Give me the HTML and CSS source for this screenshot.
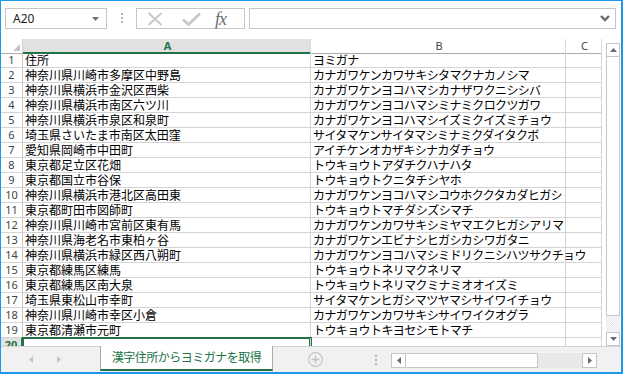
FILE: index.html
```html
<!DOCTYPE html>
<html lang="ja">
<head>
    <meta charset="UTF-8">
    <meta name="viewport" content="width=device-width, initial-scale=1.0">
    <title>漢字住所からヨミガナを取得</title>
    <link rel="stylesheet" href="styles.css">
</head>
<body>
<div class="window">
    <div class="formula-bar">
        <div class="name-box">
            <span>A20</span>
            <svg class="name-arrow" width="7" height="4" viewBox="0 0 7 4"><path d="M0 0h7L3.5 4z" fill="#707070"/></svg>
        </div>
        <div class="grip"><i></i><i></i><i></i></div>
        <div class="fx-buttons">
            <svg class="icon-cancel" width="16" height="14" viewBox="0 0 16 14"><path d="M1.5 1l13 12M14.5 1l-13 12" stroke="#c8c8c8" stroke-width="2" fill="none"/></svg>
            <svg class="icon-enter" width="19" height="14" viewBox="0 0 19 14"><path d="M1 7.5l5.5 5L18 1.5" stroke="#c8c8c8" stroke-width="2.8" fill="none"/></svg>
            <span class="fx">fx</span>
        </div>
        <div class="formula-input">
            <svg class="chevron" width="10" height="7" viewBox="0 0 10 7"><path d="M1 1l4 4 4-4" stroke="#6a6a6a" stroke-width="2.4" fill="none"/></svg>
        </div>
    </div>

    <div class="sheet-area">
        <div class="sheet">
            <div class="row head">
                <div class="cell corner"><svg width="7" height="7" viewBox="0 0 7 7"><path d="M7 0v7H0z" fill="#c4c4c4"/></svg></div>
                <div class="cell col-head selected">A</div>
                <div class="cell col-head">B</div>
                <div class="cell col-head">C</div>
            </div>
            <div class="row"><div class="cell num">1</div><div class="cell">住所</div><div class="cell kana">ヨミガナ</div><div class="cell"></div></div>
            <div class="row"><div class="cell num">2</div><div class="cell">神奈川県川崎市多摩区中野島</div><div class="cell kana">カナガワケンカワサキシタマクナカノシマ</div><div class="cell"></div></div>
            <div class="row"><div class="cell num">3</div><div class="cell">神奈川県横浜市金沢区西柴</div><div class="cell kana">カナガワケンヨコハマシカナザワクニシシバ</div><div class="cell"></div></div>
            <div class="row"><div class="cell num">4</div><div class="cell">神奈川県横浜市南区六ツ川</div><div class="cell kana">カナガワケンヨコハマシミナミクロクツガワ</div><div class="cell"></div></div>
            <div class="row"><div class="cell num">5</div><div class="cell">神奈川県横浜市泉区和泉町</div><div class="cell kana">カナガワケンヨコハマシイズミクイズミチョウ</div><div class="cell"></div></div>
            <div class="row"><div class="cell num">6</div><div class="cell">埼玉県さいたま市南区太田窪</div><div class="cell kana">サイタマケンサイタマシミナミクダイタクボ</div><div class="cell"></div></div>
            <div class="row"><div class="cell num">7</div><div class="cell">愛知県岡崎市中田町</div><div class="cell kana">アイチケンオカザキシナカダチョウ</div><div class="cell"></div></div>
            <div class="row"><div class="cell num">8</div><div class="cell">東京都足立区花畑</div><div class="cell kana">トウキョウトアダチクハナハタ</div><div class="cell"></div></div>
            <div class="row"><div class="cell num">9</div><div class="cell">東京都国立市谷保</div><div class="cell kana">トウキョウトクニタチシヤホ</div><div class="cell"></div></div>
            <div class="row"><div class="cell num">10</div><div class="cell">神奈川県横浜市港北区高田東</div><div class="cell kana">カナガワケンヨコハマシコウホククタカダヒガシ</div><div class="cell"></div></div>
            <div class="row"><div class="cell num">11</div><div class="cell">東京都町田市図師町</div><div class="cell kana">トウキョウトマチダシズシマチ</div><div class="cell"></div></div>
            <div class="row"><div class="cell num">12</div><div class="cell">神奈川県川崎市宮前区東有馬</div><div class="cell kana">カナガワケンカワサキシミヤマエクヒガシアリマ</div><div class="cell"></div></div>
            <div class="row"><div class="cell num">13</div><div class="cell">神奈川県海老名市東柏ヶ谷</div><div class="cell kana">カナガワケンエビナシヒガシカシワガタニ</div><div class="cell"></div></div>
            <div class="row"><div class="cell num">14</div><div class="cell">神奈川県横浜市緑区西八朔町</div><div class="cell kana">カナガワケンヨコハマシミドリクニシハツサクチョウ</div><div class="cell"></div></div>
            <div class="row"><div class="cell num">15</div><div class="cell">東京都練馬区練馬</div><div class="cell kana">トウキョウトネリマクネリマ</div><div class="cell"></div></div>
            <div class="row"><div class="cell num">16</div><div class="cell">東京都練馬区南大泉</div><div class="cell kana">トウキョウトネリマクミナミオオイズミ</div><div class="cell"></div></div>
            <div class="row"><div class="cell num">17</div><div class="cell">埼玉県東松山市幸町</div><div class="cell kana">サイタマケンヒガシマツヤマシサイワイチョウ</div><div class="cell"></div></div>
            <div class="row"><div class="cell num">18</div><div class="cell">神奈川県川崎市幸区小倉</div><div class="cell kana">カナガワケンカワサキシサイワイクオグラ</div><div class="cell"></div></div>
            <div class="row"><div class="cell num">19</div><div class="cell">東京都清瀬市元町</div><div class="cell kana">トウキョウトキヨセシモトマチ</div><div class="cell"></div></div>
            <div class="row"><div class="cell num selected">20</div><div class="cell active"></div><div class="cell"></div><div class="cell"></div></div>
        </div>

        <div class="vscroll">
            <div class="sb-btn"><svg width="7" height="4" viewBox="0 0 7 4"><path d="M0 4h7L3.5 0z" fill="#6a6a6a"/></svg></div>
            <div class="sb-thumb"></div>
            <div class="sb-track"></div>
            <div class="sb-btn"><svg width="7" height="4" viewBox="0 0 7 4"><path d="M0 0h7L3.5 4z" fill="#6a6a6a"/></svg></div>
        </div>
    </div>

    <div class="tab-bar">
        <div class="tab-nav">
            <svg width="4" height="7" viewBox="0 0 4 7"><path d="M4 0v7L0 3.5z" fill="#c4c4c4"/></svg>
            <svg width="4" height="7" viewBox="0 0 4 7"><path d="M0 0v7l4-3.5z" fill="#c4c4c4"/></svg>
        </div>
        <div class="tab">漢字住所からヨミガナを取得</div>
        <svg class="add-sheet" width="15" height="15" viewBox="0 0 15 15"><circle cx="7.5" cy="7.5" r="6.8" stroke="#c4c4c4" stroke-width="1.2" fill="none"/><path d="M7.5 3.5v8M3.5 7.5h8" stroke="#c4c4c4" stroke-width="1.4"/></svg>
        <div class="grip tab-grip"><i></i><i></i><i></i></div>
        <div class="hscroll">
            <div class="sb-btn"><svg width="4" height="7" viewBox="0 0 4 7"><path d="M4 0v7L0 3.5z" fill="#6a6a6a"/></svg></div>
            <div class="sb-thumb"></div>
            <div class="sb-track"></div>
            <div class="sb-btn"><svg width="4" height="7" viewBox="0 0 4 7"><path d="M0 0v7l4-3.5z" fill="#6a6a6a"/></svg></div>
        </div>
    </div>
</div>
</body>
</html>
```

FILE: styles.css
```css
* {
    box-sizing: border-box;
}
body {
    margin: 0;
    font-family: "Noto Sans", "Noto Sans CJK JP", sans-serif;
    color: #222;
}
.window {
    width: 623px;
    height: 374px;
    border-style: solid;
    border-color: #1c97ea;
    border-width: 1px 2px 2px 1px;
    background: #fff;
    display: flex;
    flex-direction: column;
    overflow: hidden;
}

/* formula bar */
.formula-bar {
    display: flex;
    align-items: flex-start;
    height: 38px;
    flex: none;
    padding: 7px 0 0 4px;
}
.name-box {
    width: 102px;
    height: 21px;
    border: 1px solid #c6c6c6;
    display: flex;
    align-items: center;
    justify-content: space-between;
    padding: 0 7px 0 7px;
    font-size: 12px;
}
.grip {
    display: flex;
    flex-direction: column;
    gap: 2px;
    margin: 5px 13px 0 14px;
}
.grip i {
    display: block;
    width: 2px;
    height: 2px;
    background: #b4b4b4;
}
.fx-buttons {
    width: 109px;
    height: 21px;
    border: 1px solid #c6c6c6;
    display: flex;
    align-items: center;
    padding-left: 10px;
}
.icon-enter {
    margin-left: 19px;
}
.fx {
    margin-left: 14px;
    font-family: "Liberation Serif", serif;
    font-style: italic;
    font-size: 18px;
    color: #6e6e6e;
    letter-spacing: -1px;
    line-height: 1;
}
.formula-input {
    width: 367px;
    height: 21px;
    margin-left: 4px;
    border: 1px solid #c6c6c6;
    display: flex;
    align-items: center;
    justify-content: flex-end;
    padding-right: 5px;
}

/* sheet */
.sheet-area {
    display: flex;
    height: 307px;
    flex: none;
}
.sheet {
    width: 601px;
    height: 307px;
    overflow: hidden;
}
.row {
    display: grid;
    grid-template-columns: 22px 288px 255px 36px;
    height: 15px;
}
.cell {
    border-right: 1px solid #d4d4d4;
    border-bottom: 1px solid #d4d4d4;
    padding-left: 2px;
    font-family: "Noto Sans CJK JP", sans-serif;
    font-size: 12px;
    line-height: 14px;
    white-space: nowrap;
    color: #000;
}
.cell.kana {
    letter-spacing: -0.6px;
}
.cell.num {
    padding: 0;
    text-align: center;
    font-family: "Noto Sans", sans-serif;
    font-size: 11px;
    color: #444;
    border-right-color: #c6c6c6;
}
.row.head {
    height: 14px;
}
.row.head .cell {
    border-bottom-color: #ababab;
    line-height: 13px;
}
.cell.corner {
    display: flex;
    align-items: flex-end;
    justify-content: flex-end;
    padding: 0 2px 2px 0;
}
.cell.col-head {
    text-align: center;
    font-family: "Noto Sans", sans-serif;
    font-size: 11px;
    color: #444;
    border-right-color: #dadada;
}
.selected {
    background: #e1e1e1;
    color: #217346 !important;
    font-weight: bold;
}
.row.head .cell.selected {
    border-bottom: 2px solid #217346;
}
.cell.num.selected {
    border-right: 2px solid #217346;
}
.cell.active {
    box-shadow: 0 0 0 1px #217346, inset 0 0 0 1px #217346;
}

/* scrollbars */
.vscroll {
    width: 14px;
    margin: 4px 0 0 4px;
    display: flex;
    flex-direction: column;
}
.sb-btn {
    flex: none;
    width: 14px;
    height: 14px;
    border: 1px solid #c6c6c6;
    background: #fff;
    display: flex;
    align-items: center;
    justify-content: center;
}
.vscroll .sb-thumb {
    height: 259px;
    border: 1px solid #c6c6c6;
    border-top: none;
}
.vscroll .sb-track {
    flex: 1;
    background: repeating-conic-gradient(#e4e4e4 0 25%, #fff 0 50%) 0 0 / 2px 2px;
}

/* sheet tabs */
.tab-bar {
    flex: 1;
    display: flex;
    align-items: flex-start;
    background: #f1f1f1;
    border-top: 1px solid #d4d4d4;
}
.tab-nav {
    width: 99px;
    height: 24px;
    display: flex;
    align-items: center;
    padding-left: 28px;
    gap: 24px;
}
.tab {
    width: 173px;
    height: 25px;
    margin-top: -1px;
    background: #fff;
    border-left: 1px solid #ababab;
    border-right: 1px solid #ababab;
    border-bottom: 2px solid #217346;
    color: #217346;
    font-family: "Noto Sans CJK JP", sans-serif;
    font-size: 12px;
    letter-spacing: -0.5px;
    line-height: 22px;
    text-align: center;
}
.add-sheet {
    margin: 5px 0 0 35px;
}
.tab-grip {
    margin: 8px 0 0 52px;
}
.hscroll {
    width: 206px;
    height: 15px;
    margin: 6px 0 0 14px;
    display: flex;
    background: #e8e8e8;
}
.hscroll .sb-btn {
    width: 15px;
    height: 15px;
}
.hscroll .sb-thumb {
    width: 132px;
    background: #fff;
    border: 1px solid #c6c6c6;
    border-left: none;
}
.hscroll .sb-track {
    flex: 1;
}
```
